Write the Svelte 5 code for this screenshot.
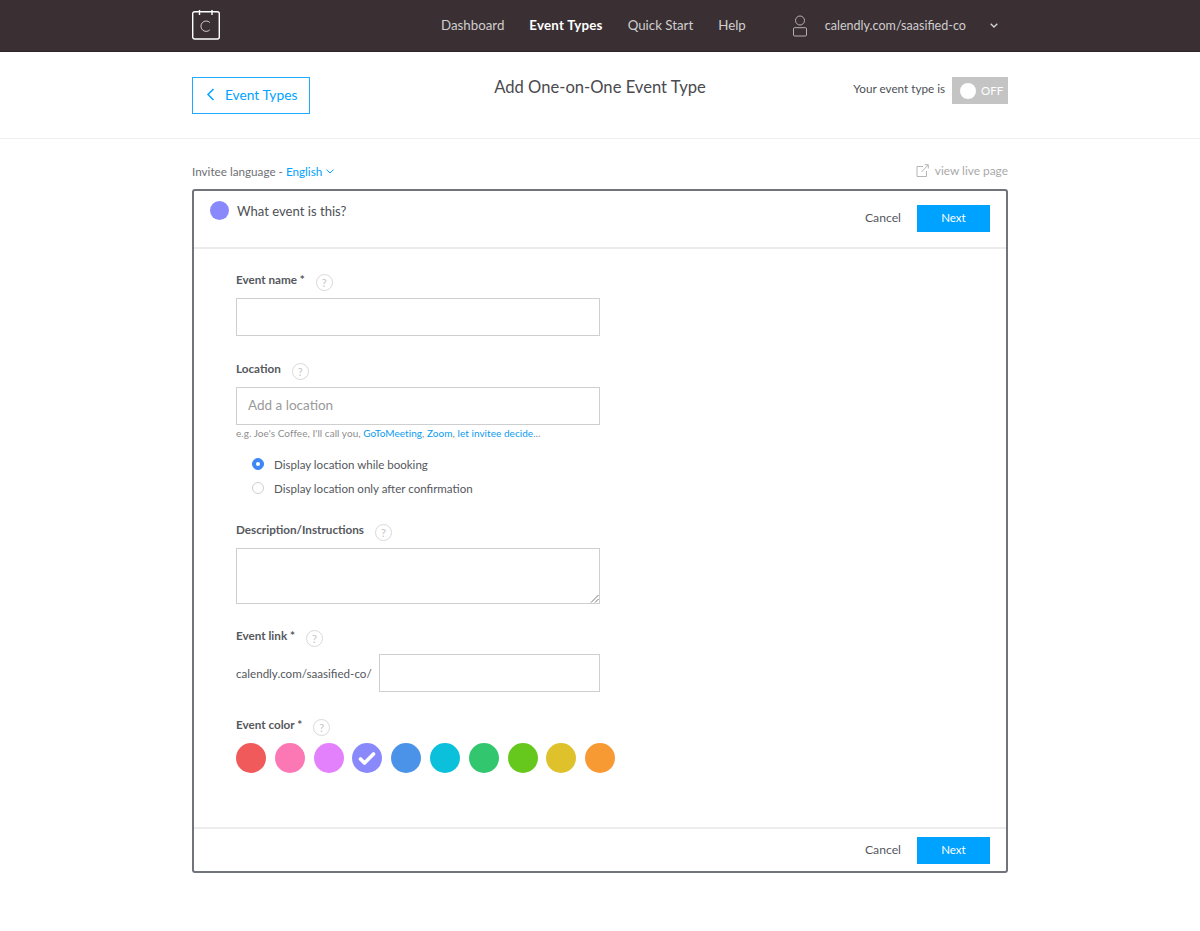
<script>
  const colors = ['#f05a5a','#fb78b4','#e380fb','#8989fc','#4b93e9','#0bc0da','#32c76f','#66c81c','#dfc12c','#f79a34'];
  const selected = 3;
</script>

<div class="page">
  <header class="top">
    <div class="wrap top-in">
      <svg class="logo" width="28" height="30" viewBox="0 0 28 30" fill="none" stroke="#fff">
        <rect x="0.700" y="1.700" width="26.600" height="27.300" rx="2" stroke-width="1.400"/>
        <path d="M7.500 0V5M20 0V5" stroke-width="1.400"/>
        <path d="M17.800 12.500a5.200 5.200 0 1 0 0 7.400" stroke-width="1" stroke="#cfcccd"/>
      </svg>
      <nav class="nav">
        <span>Dashboard</span>
        <span class="active">Event Types</span>
        <span>Quick Start</span>
        <span>Help</span>
      </nav>
      <div class="account">
        <svg width="16" height="22" viewBox="0 0 16 22" fill="none" stroke="#b5b1b3" stroke-width="1">
          <circle cx="8" cy="5.500" r="4.500"/>
          <rect x="1.500" y="12.700" width="13" height="8.300" rx="1"/>
        </svg>
        <span class="acct-url">calendly.com/saasified-co</span>
        <svg class="acct-caret" width="8" height="5" viewBox="0 0 8 5" fill="none" stroke="#d5d3d4" stroke-width="1.300"><path d="M.700.700L4 4 7.300.700"/></svg>
      </div>
    </div>
  </header>

  <section class="sub">
    <div class="wrap sub-in">
      <a class="back">
        <svg width="9" height="13" viewBox="0 0 9 13" fill="none" stroke="#00a2ff" stroke-width="1.500"><path d="M7.500 1L2 6.500 7.500 12"/></svg>
        <span>Event Types</span>
      </a>
      <h1>Add One-on-One Event Type</h1>
      <div class="status">
        <span class="status-text">Your event type is</span>
        <div class="toggle"><i></i><b>OFF</b></div>
      </div>
    </div>
  </section>

  <main class="wrap">
    <div class="meta">
      <div class="lang">Invitee language - <a>English</a>
        <svg width="8" height="5" viewBox="0 0 8 5" fill="none" stroke="#00a2ff" stroke-width="1"><path d="M.5.700l3.500 3.300L7.500.700"/></svg>
      </div>
      <div class="live">
        <svg width="13" height="13" viewBox="0 0 13 13" fill="none" stroke="#b5b5b5" stroke-width="1">
          <path d="M7 2.500H1v10h9.500V7"/>
          <path d="M5.500 8L12 1M8.500.700H12.300V4.500"/>
        </svg>
        <span>view live page</span>
      </div>
    </div>

    <div class="card">
      <div class="card-head">
        <div class="head-left">
          <span class="dot"></span>
          <span class="title">What event is this?</span>
        </div>
        <div class="actions">
          <span class="cancel">Cancel</span>
          <button class="next">Next</button>
        </div>
      </div>

      <div class="form">
        <div class="label l-name">Event name * <span class="q">?</span></div>
        <div class="input"></div>

        <div class="label l-loc">Location <span class="q">?</span></div>
        <div class="input ph">Add a location</div>
        <div class="hint">e.g. Joe's Coffee, I'll call you, <a>GoToMeeting</a>, <a>Zoom</a>, <a>let invitee decide</a>...</div>

        <div class="radios">
          <div class="radio"><span class="r on"></span>Display location while booking</div>
          <div class="radio"><span class="r"></span>Display location only after confirmation</div>
        </div>

        <div class="label l-desc">Description/Instructions <span class="q">?</span></div>
        <div class="input area">
          <svg class="grip" width="9" height="9" viewBox="0 0 9 9" stroke="#777" stroke-width="1"><path d="M1 8.500L8.500 1M5 8.500L8.500 5"/></svg>
        </div>

        <div class="label l-link">Event link * <span class="q">?</span></div>
        <div class="link-row">
          <span>calendly.com/saasified-co/</span>
          <div class="input short"></div>
        </div>

        <div class="label l-color">Event color * <span class="q">?</span></div>
        <div class="swatches">
          {#each colors as c, i}
            <span class="swatch" style="background:{c}">
              {#if i === selected}
                <svg width="18" height="15" viewBox="0 0 18 15" fill="none" stroke="#fff" stroke-width="3.600" stroke-linecap="round" stroke-linejoin="round"><path d="M2.500 8l4 4L15.500 3"/></svg>
              {/if}
            </span>
          {/each}
        </div>
      </div>

      <div class="card-foot">
        <span class="cancel">Cancel</span>
        <button class="next">Next</button>
      </div>
    </div>
  </main>
</div>

<style>
  :global(body) {
    margin: 0;
    background: #fff;
  }
  .page {
    font-family: Lato, "Open Sans", sans-serif;
    color: #4d5055;
    min-height: 931px;
  }
  .wrap {
    width: 816px;
    margin: 0 auto;
  }
  .top {
    height: 52px;
    box-sizing: border-box;
    background: #3a3034;
    border-bottom: 1px solid #2b2528;
  }
  .top-in {
    display: flex;
    align-items: center;
    height: 51px;
    white-space: nowrap;
  }
  .logo {
    margin-top: -1px;
    flex: none;
  }
  .nav {
    display: flex;
    gap: 25px;
    margin-left: 221px;
    font-size: 13.300px;
    color: #d0cecf;
    margin-top: -1px;
  }
  .nav .active {
    color: #fff;
    font-weight: 700;
    letter-spacing: 0.220px;
  }
  .account {
    display: flex;
    align-items: center;
    margin-left: 46px;
    color: #d0cecf;
    font-size: 12.550px;
  }
  .acct-url {
    margin-left: 17px;
  }
  .acct-caret {
    margin-left: 24px;
  }
  .sub {
    height: 87px;
    box-sizing: border-box;
    border-bottom: 1px solid #efefef;
  }
  .sub-in {
    display: flex;
    justify-content: space-between;
    align-items: flex-start;
    position: relative;
    padding-top: 25px;
  }
  .back {
    display: flex;
    align-items: center;
    box-sizing: border-box;
    width: 118px;
    height: 37px;
    border: 1px solid #1fa9ff;
    padding: 0 0 2px 13px;
    gap: 10px;
    color: #00a2ff;
    font-size: 13.750px;
  }
  h1 {
    margin: 0;
    font-size: 16.600px;
    font-weight: 400;
    line-height: 22px;
    color: #4a4a4f;
    position: absolute;
    left: 0;
    right: 0;
    top: 24px;
    text-align: center;
  }
  .status {
    display: flex;
    align-items: center;
    gap: 7px;
    font-size: 11.700px;
  }
  .status-text {
    margin-bottom: 5px;
  }
  .toggle {
    width: 56px;
    height: 27px;
    background: #c4c4c4;
    display: flex;
    align-items: center;
    padding-left: 8px;
    box-sizing: border-box;
    gap: 5px;
  }
  .toggle i {
    width: 16px;
    height: 16px;
    border-radius: 50%;
    background: #fff;
  }
  .toggle b {
    color: #fff;
    font-weight: 400;
    font-size: 11.500px;
  }
  .meta {
    display: flex;
    justify-content: space-between;
    align-items: center;
    padding-top: 14px;
    height: 50px;
    box-sizing: border-box;
    font-size: 11.700px;
    color: #6e7074;
  }
  .lang a {
    color: #00a2ff;
  }
  .lang svg {
    margin-left: 1px;
    vertical-align: 2px;
  }
  .live {
    display: flex;
    align-items: center;
    gap: 6px;
    color: #a9a9a9;
    font-size: 11.900px;
    margin-top: -1px;
  }
  .card {
    box-sizing: border-box;
    height: 684px;
    border: 2px solid #71747b;
    border-radius: 3px;
    display: flex;
    flex-direction: column;
  }
  .card-head {
    height: 56px;
    flex: none;
    border-bottom: 2px solid #ececec;
    display: flex;
    justify-content: space-between;
    padding: 0 16px;
  }
  .head-left {
    display: flex;
    align-items: center;
    height: 38px;
    gap: 8px;
  }
  .dot {
    width: 19px;
    height: 19px;
    border-radius: 50%;
    background: #8989fc;
  }
  .title {
    font-size: 13.100px;
    margin-top: 2px;
  }
  .actions,
  .card-foot {
    display: flex;
    align-items: center;
    gap: 16px;
    justify-content: flex-end;
  }
  .actions {
    margin-top: 14px;
    height: 27px;
  }
  .cancel {
    font-size: 12.200px;
    color: #55585d;
    margin-top: -2px;
  }
  .next {
    width: 73px;
    height: 27px;
    border: 0;
    padding: 0 0 2px;
    background: #00a2ff;
    color: #fff;
    font: inherit;
    font-size: 11.500px;
  }
  .form {
    flex: 1;
    padding: 0 0 0 42px;
  }
  .label {
    display: flex;
    align-items: center;
    font-size: 11.700px;
    font-weight: 700;
    color: #55585d;
    height: 18px;
  }
  .q {
    box-sizing: border-box;
    width: 17px;
    height: 17px;
    margin-left: 11px;
    border: 1px solid #d9d9d9;
    border-radius: 50%;
    font-size: 11px;
    font-weight: 400;
    color: #c4c4c4;
    display: inline-flex;
    align-items: center;
    justify-content: center;
    margin-top: 6px;
  }
  .l-name { margin-top: 21px; margin-bottom: 10px; }
  .l-loc { margin-top: 23px; margin-bottom: 10px; }
  .l-desc { margin-top: 20px; margin-bottom: 10px; }
  .l-link { margin-top: 22px; margin-bottom: 10px; }
  .l-color { margin-top: 23px; margin-bottom: 10px; }
  .input {
    box-sizing: border-box;
    width: 364px;
    height: 38px;
    border: 1px solid #cfcfcf;
    display: flex;
    align-items: center;
    padding: 0 0 2px 11px;
    font-size: 13.500px;
    color: #9a9a9a;
  }
  .area {
    height: 56px;
    position: relative;
  }
  .grip {
    position: absolute;
    right: 0;
    bottom: 0;
  }
  .short {
    width: 221px;
  }
  .hint {
    font-size: 10px;
    letter-spacing: 0.050px;
    color: #8e8e8e;
    height: 16px;
    line-height: 16px;
  }
  .hint a {
    color: #0a9bef;
  }
  .radios {
    padding: 11px 0 0 16px;
  }
  .radio {
    display: flex;
    align-items: center;
    height: 24px;
    font-size: 11.550px;
    color: #55585d;
    gap: 10px;
  }
  .r {
    box-sizing: border-box;
    width: 12px;
    height: 12px;
    border: 1px solid #cfcfcf;
    border-radius: 50%;
    position: relative;
  }
  .r.on {
    border-color: #3d87f5;
    background: #3d87f5;
  }
  .r.on::after {
    content: "";
    position: absolute;
    left: 3px;
    top: 3px;
    width: 4px;
    height: 4px;
    border-radius: 50%;
    background: #fff;
  }
  .link-row {
    display: flex;
    align-items: center;
    gap: 7px;
    font-size: 11.600px;
    color: #55585d;
  }
  .swatches {
    display: flex;
    gap: 8.800px;
  }
  .swatch {
    width: 30px;
    height: 30px;
    border-radius: 50%;
    display: flex;
    align-items: center;
    justify-content: center;
  }
  .card-foot {
    flex: none;
    height: 44px;
    box-sizing: border-box;
    border-top: 2px solid #ececec;
    padding: 7px 16px 7px 0;
  }
</style>
